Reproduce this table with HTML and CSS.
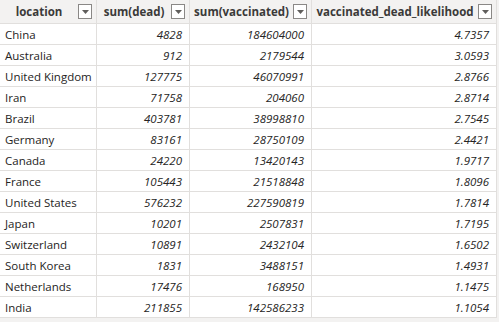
FILE: index.html
```html
<!DOCTYPE html>
<html>
<head>
<meta charset="utf-8">
<link rel="stylesheet" href="styles.css">
</head>
<body>
<div class="grid">
  <div class="hd"><span class="ht">location</span><span class="fb"><svg width="7" height="4" viewBox="0 0 7 4"><path d="M0 0H7L3.5 4Z" fill="#605e5c"/></svg></span></div>
  <div class="hd"><span class="ht">sum(dead)</span><span class="fb"><svg width="7" height="4" viewBox="0 0 7 4"><path d="M0 0H7L3.5 4Z" fill="#605e5c"/></svg></span></div>
  <div class="hd"><span class="ht">sum(vaccinated)</span><span class="fb"><svg width="7" height="4" viewBox="0 0 7 4"><path d="M0 0H7L3.5 4Z" fill="#605e5c"/></svg></span></div>
  <div class="hd last"><span class="ht">vaccinated_dead_likelihood</span><span class="fb"><svg width="7" height="4" viewBox="0 0 7 4"><path d="M0 0H7L3.5 4Z" fill="#605e5c"/></svg></span></div>

  <div class="c">China</div><div class="c n">4828</div><div class="c n">184604000</div><div class="c n last">4.7357</div>
  <div class="c">Australia</div><div class="c n">912</div><div class="c n">2179544</div><div class="c n last">3.0593</div>
  <div class="c">United Kingdom</div><div class="c n">127775</div><div class="c n">46070991</div><div class="c n last">2.8766</div>
  <div class="c">Iran</div><div class="c n">71758</div><div class="c n">204060</div><div class="c n last">2.8714</div>
  <div class="c">Brazil</div><div class="c n">403781</div><div class="c n">38998810</div><div class="c n last">2.7545</div>
  <div class="c">Germany</div><div class="c n">83161</div><div class="c n">28750109</div><div class="c n last">2.4421</div>
  <div class="c">Canada</div><div class="c n">24220</div><div class="c n">13420143</div><div class="c n last">1.9717</div>
  <div class="c">France</div><div class="c n">105443</div><div class="c n">21518848</div><div class="c n last">1.8096</div>
  <div class="c">United States</div><div class="c n">576232</div><div class="c n">227590819</div><div class="c n last">1.7814</div>
  <div class="c">Japan</div><div class="c n">10201</div><div class="c n">2507831</div><div class="c n last">1.7195</div>
  <div class="c">Switzerland</div><div class="c n">10891</div><div class="c n">2432104</div><div class="c n last">1.6502</div>
  <div class="c">South Korea</div><div class="c n">1831</div><div class="c n">3488151</div><div class="c n last">1.4931</div>
  <div class="c">Netherlands</div><div class="c n">17476</div><div class="c n">168950</div><div class="c n last">1.1475</div>
  <div class="c">India</div><div class="c n">211855</div><div class="c n">142586233</div><div class="c n last">1.1054</div>
</div>
</body>
</html>
```
FILE: styles.css
```css
html, body {
  margin: 0;
  padding: 0;
  background: #f3f2f1;
  width: 499px;
  height: 322px;
  overflow: hidden;
}
.grid {
  display: grid;
  grid-template-columns: 97px 93px 122px 185px;
  grid-auto-rows: 21px;
  grid-template-rows: 24px;
  width: 497px;
  background: #fff;
  font-family: "Open Sans", "Noto Sans", sans-serif;
  font-size: 11.5px;
  color: #252423;
}
.hd {
  background: #f3f2f1;
  border-right: 1px solid #e1dfdd;
  border-bottom: 1px solid #e1dfdd;
  display: flex;
  align-items: center;
  padding-right: 4px;
  font-weight: 700;
  font-size: 11.5px;
  color: #3b3a39;
}
.ht {
  flex: 1;
  text-align: center;
  white-space: nowrap;
}
.fb {
  width: 12px;
  height: 13px;
  border: 1px solid #8a8886;
  background: #fff;
  display: flex;
  align-items: center;
  justify-content: center;
  flex: none;
}
.c {
  border-right: 1px solid #e1dfdd;
  border-bottom: 1px solid #e1dfdd;
  padding: 0 5px;
  display: flex;
  align-items: center;
  white-space: nowrap;
}
.n {
  justify-content: flex-end;
  font-style: italic;
  padding-right: 7px;
}
```
